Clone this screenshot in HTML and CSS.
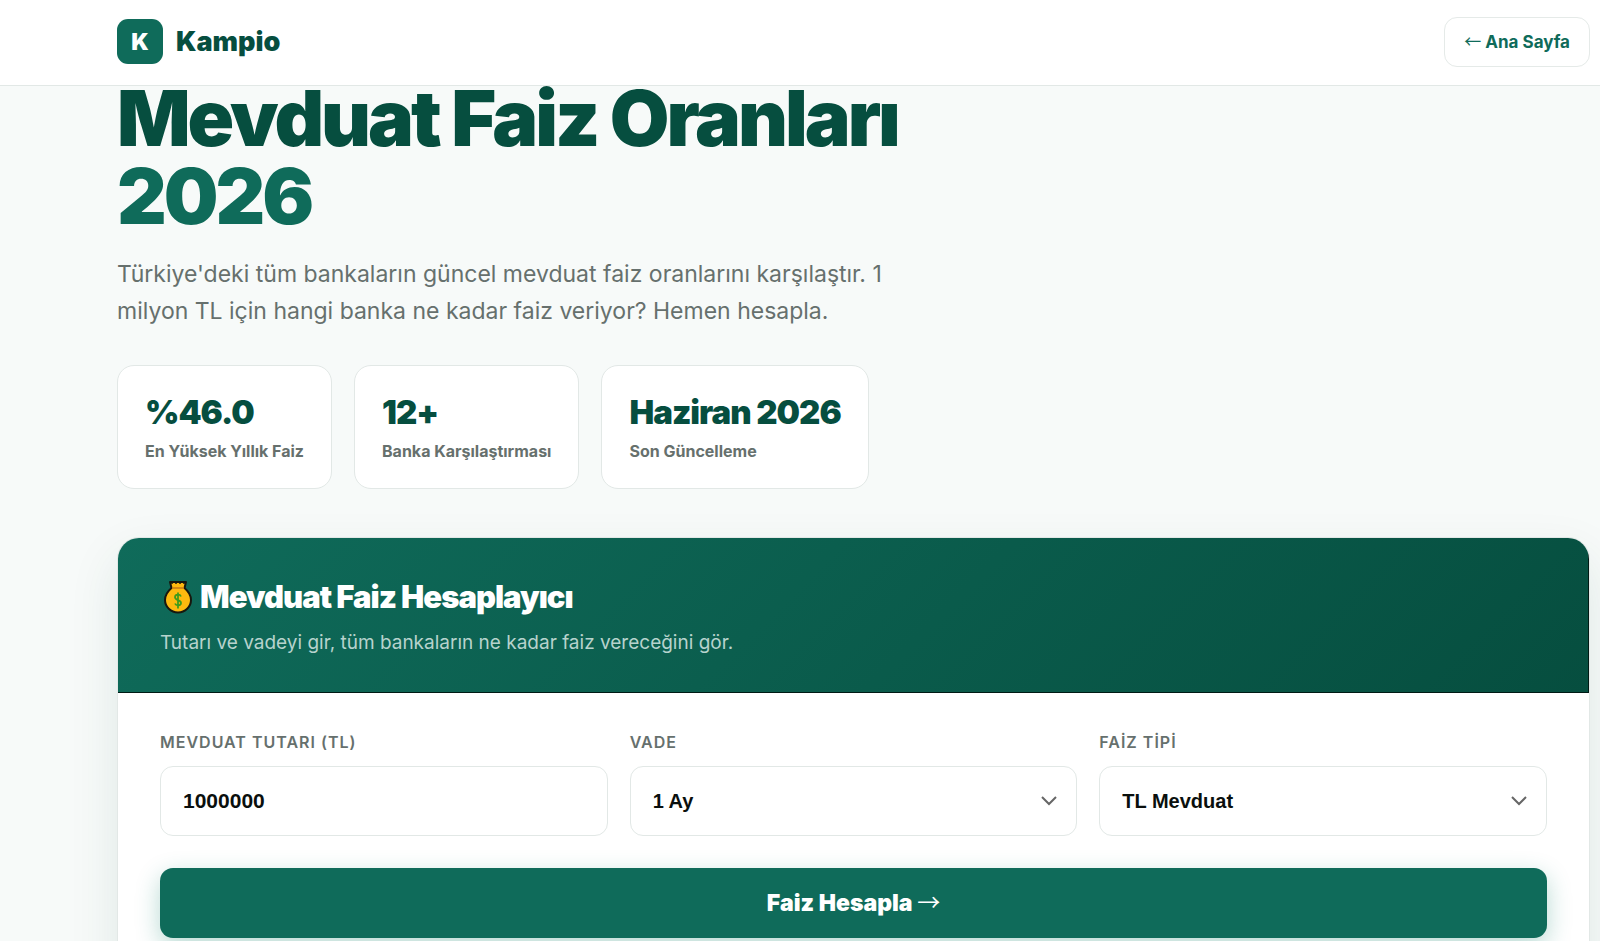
FILE: index.html
```html
<!DOCTYPE html>
<html lang="tr">
<head>
  <meta charset="UTF-8" />
  <meta name="viewport" content="width=device-width, initial-scale=1.0" />
  <title>Mevduat Faiz Oranları 2026 - Kampio</title>
  <link rel="stylesheet" href="styles.css">
</head>
<body>
  <header class="header">
    <a href="#" class="logo">
      <span class="logo-mark">K</span>
      <span class="logo-text">Kampio</span>
    </a>
    <a href="#" class="back-btn"><span class="arrow">←</span> Ana Sayfa</a>
  </header>

  <main class="container">
    <section class="hero">
      <h1>Mevduat Faiz Oranları <span>2026</span></h1>
      <p>Türkiye'deki tüm bankaların güncel mevduat faiz oranlarını karşılaştır. 1 milyon TL için hangi banka ne kadar faiz veriyor? Hemen hesapla.</p>
    </section>

    <section class="stats">
      <div class="stat">
        <div class="stat-value">%46.0</div>
        <div class="stat-label">En Yüksek Yıllık Faiz</div>
      </div>
      <div class="stat">
        <div class="stat-value">12+</div>
        <div class="stat-label">Banka Karşılaştırması</div>
      </div>
      <div class="stat">
        <div class="stat-value">Haziran 2026</div>
        <div class="stat-label">Son Güncelleme</div>
      </div>
    </section>

    <section class="calc">
      <div class="calc-header">
        <h2>
          <svg class="bag" viewBox="0 0 28 34" aria-hidden="true">
            <path d="M6 2h16l-1.500 6c3.500 3 6.500 7 6.500 12a13 12.500 0 0 1-26 0C1 15 4 11 7.500 8z" fill="#fdb90f" stroke="#17180f" stroke-width="2" stroke-linejoin="round"/>
            <path d="M8 8h12" stroke="#c67a14" stroke-width="1.500"/>
            <path d="M8 2v2M12 2v2M16 2v2M20 2v2" stroke="#17180f" stroke-width="1.500"/>
            <path d="M17 16.500c-1-2.500-6-2.500-6 .800 0 3.500 6 2.200 6 5.700 0 3-5 3-6 .500M14 12.500v16" fill="none" stroke="#3f9b1c" stroke-width="1.800"/>
          </svg>
          Mevduat Faiz Hesaplayıcı
        </h2>
        <p>Tutarı ve vadeyi gir, tüm bankaların ne kadar faiz vereceğini gör.</p>
      </div>

      <form class="calc-body">
        <div class="fields">
          <div class="field">
            <label for="tutar">Mevduat Tutarı (TL)</label>
            <input type="text" inputmode="numeric" id="tutar" value="1000000">
          </div>
          <div class="field">
            <label for="vade">Vade</label>
            <select id="vade">
              <option>1 Ay</option>
              <option>3 Ay</option>
              <option>6 Ay</option>
              <option>12 Ay</option>
            </select>
          </div>
          <div class="field">
            <label for="tip">Faiz Tipi</label>
            <select id="tip">
              <option>TL Mevduat</option>
              <option>Döviz Mevduat</option>
            </select>
          </div>
        </div>
        <button type="button" class="calc-btn">Faiz Hesapla <span class="arrow">→</span></button>
      </form>
    </section>
  </main>
</body>
</html>
```
FILE: styles.css
```css
* {
  box-sizing: border-box;
  margin: 0;
  padding: 0;
}

body {
  font-family: Inter, "Liberation Sans", sans-serif;
  background: #f7faf9;
  color: #064e3f;
}

/* header */
.header {
  position: fixed;
  top: 0;
  left: 0;
  right: 0;
  z-index: 10;
  height: 86px;
  padding: 0 10px 2px 117px;
  display: flex;
  align-items: center;
  justify-content: space-between;
  background: #fff;
  border-bottom: 1px solid #e2e8e6;
}

.logo {
  display: flex;
  align-items: center;
  gap: 13px;
  text-decoration: none;
  color: #064e3f;
}

.logo-mark {
  width: 46px;
  height: 45px;
  border-radius: 11px;
  display: flex;
  align-items: center;
  justify-content: center;
  background: #0f6b5a;
  color: #fff;
  font-size: 23px;
  font-weight: 900;
}

.logo-text {
  font-size: 27px;
  font-weight: 900;
}

.back-btn {
  padding: 13px 19px;
  border: 1px solid #e5eae8;
  border-radius: 13px;
  background: #fff;
  color: #0f6b5a;
  font-size: 17px;
  font-weight: 700;
  line-height: 22px;
  text-decoration: none;
}

.arrow {
  font-family: "Noto Sans CJK JP", sans-serif;
  font-weight: 400;
  line-height: 1;
}

.container {
  padding: 79px 10px 40px 117px;
}

/* hero */
.hero {
  max-width: 800px;
}

h1 {
  font-size: 77px;
  font-weight: 900;
  line-height: 78px;
  letter-spacing: -3px;
}

h1 span {
  display: block;
  color: #0f6b5a;
}

.hero p {
  margin-top: 21px;
  font-size: 23px;
  line-height: 37px;
  color: #66706d;
}

.stats {
  display: flex;
  flex-wrap: wrap;
  gap: 22px;
  margin-top: 35px;
}

.stat {
  padding: 27px;
  border: 1px solid #e2e8e6;
  border-radius: 17px;
  background: #fff;
}

.stat-value {
  font-size: 33px;
  font-weight: 900;
  line-height: 38px;
  letter-spacing: -1px;
}

.stat-label {
  margin-top: 10px;
  font-size: 16px;
  font-weight: 700;
  line-height: 20px;
  color: #66706d;
}

/* calculator */
.calc {
  margin-top: 48px;
  border: 1px solid #e2e8e6;
  border-radius: 22px;
  background: #fff;
  box-shadow: 0 20px 50px rgba(6, 78, 63, 0.1);
  overflow: hidden;
}

.calc-header {
  padding: 40px 42px 37px;
  background: linear-gradient(135deg, #0f6b5a, #064e3f) border-box;
  border-right: 1px solid #001a14;
  border-bottom: 1px solid #001a14;
  color: #fff;
}

.calc-header h2 {
  display: flex;
  align-items: center;
  gap: 8px;
  font-size: 31px;
  font-weight: 900;
  line-height: 38px;
  letter-spacing: -1px;
}

.bag {
  width: 28px;
  height: 34px;
  margin-left: 4px;
}

.calc-header p {
  margin-top: 15px;
  font-size: 19px;
  line-height: 24px;
  color: #b7d3cd;
}

.calc-body {
  padding: 39px 42px 42px;
}

.fields {
  display: grid;
  grid-template-columns: repeat(3, 1fr);
  gap: 22px;
}

.field label {
  display: block;
  margin-bottom: 14px;
  font-size: 16px;
  font-weight: 600;
  line-height: 20px;
  letter-spacing: 1px;
  text-transform: uppercase;
  color: #66706d;
}

.field input,
.field select {
  width: 100%;
  height: 70px;
  padding: 0 22px;
  border: 1px solid #e2e8e6;
  border-radius: 13px;
  background: #fff;
  color: #0a0f0d;
  font-family: "Liberation Sans", Arial, sans-serif;
  font-size: 21px;
  font-weight: 600;
}

.field select {
  appearance: none;
  font-size: 20px;
  background: #fff url("data:image/svg+xml,%3Csvg xmlns='http://www.w3.org/2000/svg' width='18' height='12' fill='none' stroke='%23666' stroke-width='2'%3E%3Cpath d='M2 2l7 7 7-7'/%3E%3C/svg%3E") no-repeat right 18px center;
}

.calc-btn {
  width: 100%;
  height: 70px;
  margin-top: 32px;
  border: none;
  border-radius: 13px;
  background: #0f6b5a;
  box-shadow: 0 8px 24px rgba(15, 130, 105, 0.3);
  color: #fff;
  font-family: Inter, sans-serif;
  font-size: 23px;
  font-weight: 900;
  cursor: pointer;
}
```
